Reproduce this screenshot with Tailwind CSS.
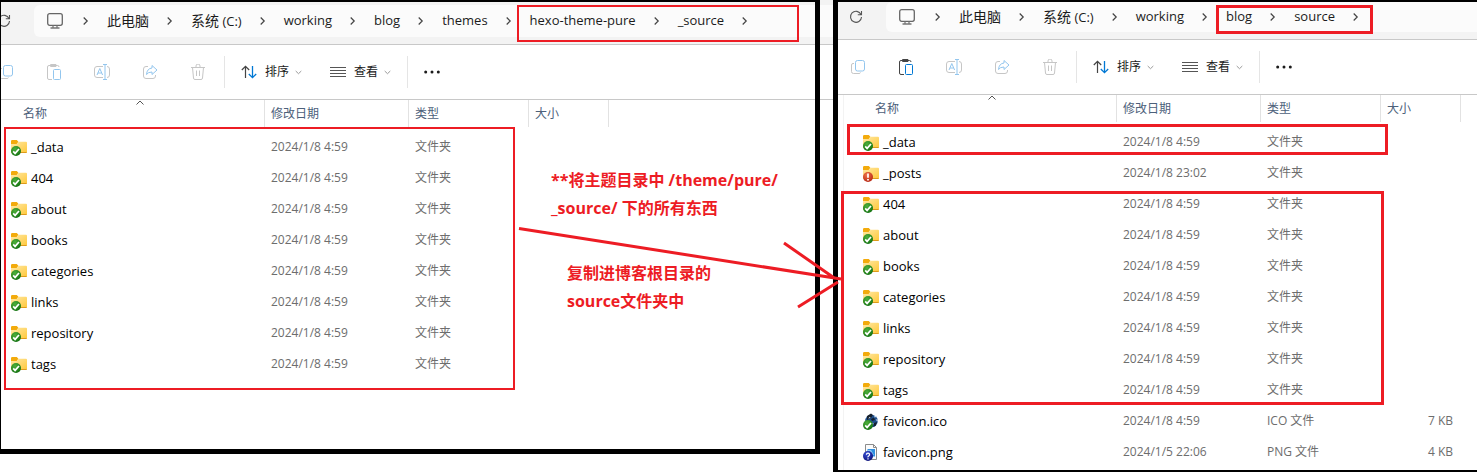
<!DOCTYPE html>
<html lang="zh-CN">
<head>
<meta charset="utf-8">
<title>source</title>
<script src="https://cdn.jsdelivr.net/npm/@tailwindcss/browser@4"></script>
</head>
<body class="relative overflow-hidden bg-white font-['Open_Sans','Noto_Sans_CJK_SC',sans-serif] text-[12px] text-[#1b1b1b]">

<svg class="absolute size-0" aria-hidden="true">
  <defs>
    <linearGradient id="gFolder" x1="0" y1="0" x2="1" y2="1"><stop offset="0" stop-color="#ffe9a6"/><stop offset="1" stop-color="#ffc83a"/></linearGradient>
    <radialGradient id="gGreen" cx=".4" cy=".3" r=".8"><stop offset="0" stop-color="#4fb03c"/><stop offset="1" stop-color="#0b6a0b"/></radialGradient>
    <radialGradient id="gRed" cx=".4" cy=".3" r=".8"><stop offset="0" stop-color="#f0764c"/><stop offset="1" stop-color="#b01e0c"/></radialGradient>
    <radialGradient id="gBlue" cx=".4" cy=".3" r=".8"><stop offset="0" stop-color="#3a52d8"/><stop offset="1" stop-color="#070a6e"/></radialGradient>
    <symbol id="folder" viewBox="0 0 16 16">
      <path d="M0 2.2Q0 1 1.2 1h4.6l1.6 1.7L5.8 5H0z" fill="#f3ab0c"/>
      <path d="M0 5h5.6l2-2.3H15a1 1 0 0 1 1 1V13a1 1 0 0 1-1 1H0z" fill="url(#gFolder)"/>
      <path d="M8 13.5h7.6" stroke="#dc9a1c"/>
    </symbol>
    <symbol id="ok" viewBox="0 0 10 10">
      <circle cx="5" cy="5" r="5" fill="url(#gGreen)"/>
      <path d="M2.2 5.4l1.9 2L8 3" fill="none" stroke="#fff" stroke-width="1.7"/>
    </symbol>
    <symbol id="warn" viewBox="0 0 10 10">
      <circle cx="5" cy="5" r="5" fill="url(#gRed)"/>
      <path d="M5 1.6v4.2M5 7v1.6" stroke="#fff" stroke-width="1.7"/>
    </symbol>
    <symbol id="unknown" viewBox="0 0 10 10">
      <circle cx="5" cy="5" r="5" fill="url(#gBlue)"/>
      <path d="M3.4 3.7Q3.5 2.2 5 2.2T6.6 3.6Q6.6 4.4 5.7 4.9T5 6.3M5 7.2v1.2" fill="none" stroke="#fff" stroke-width="1.2"/>
    </symbol>
    <symbol id="globe" viewBox="0 0 16 16">
      <circle cx="8.5" cy="8" r="6.3" fill="#1f4f8c"/>
      <path d="M4 3l4-2.5 2 1.5-2 3-4 2zM8 6l3-1.5 1 2.5-3 1zM11 10l3-1-1.5 4-2 .5z" fill="#16202c"/>
      <path d="M11 2.2l2.4 1.4-1.6 1.2zM12.6 6.4l2.4.2-.6 2zM8.6 9.6l2 .8-1.4 2.6zM5.2 5.4l1.6-1.6.8 1.2z" fill="#d4e6f5"/>
    </symbol>
    <symbol id="image" viewBox="0 0 16 16">
      <path d="M2.5 .5h8l3 3v12h-11z" fill="#fbfbfb" stroke="#8c8c8c"/>
      <path d="M10.5 .5v3h3" fill="none" stroke="#8c8c8c"/>
      <path d="M4.500 5h7.500v7.500h-7.500z" fill="#2f8fe0"/>
      <path d="M5 6h3l3 5H5z" fill="#8cc8f4"/>
    </symbol>
    <symbol id="copy" viewBox="0 0 16 16">
      <rect x="5.500" y="1.500" width="9" height="10.500" rx="2" fill="none" stroke="#93c6ee"/>
      <path d="M4 4.500H3a1.500 1.500 0 0 0-1.500 1.500v6.500a2 2 0 0 0 2 2H9A1.500 1.500 0 0 0 10.500 13.500" fill="none" stroke="#c6c6c6"/>
    </symbol>
    <symbol id="paste" viewBox="0 0 16 16">
      <path d="M6 15.500H3A1.500 1.500 0 0 1 1.500 14V3A1.500 1.500 0 0 1 3 1.500h8.500A1.500 1.500 0 0 1 13 3M4.500.5h5.500v2H4.500z" fill="none" stroke="currentColor"/>
      <rect x="7.500" y="5.500" width="7" height="10" rx="1" fill="none" stroke="var(--sheet)"/>
    </symbol>
    <symbol id="rename" viewBox="0 0 16 16">
      <path d="M9 2.500H3A2.500 2.500 0 0 0 .5 5v6A2.500 2.500 0 0 0 3 13.500h6M13 2.500A2.500 2.500 0 0 1 15.500 5v6a2.500 2.500 0 0 1-2.500 2.500" fill="none" stroke="#c6c6c6"/>
      <path d="M11 .5v15M9 .5h4M9 15.500h4M3 11l2.800-6.500L8.600 11M4 9h3.600" fill="none" stroke="#93c6ee"/>
    </symbol>
    <symbol id="share" viewBox="0 0 16 16">
      <path d="M6 2.500H4A2.500 2.500 0 0 0 1.500 5v7A2.500 2.500 0 0 0 4 14.500h7a2.500 2.500 0 0 0 2.500-2.500v-1" fill="none" stroke="#c6c6c6"/>
      <path d="M10 1.500l5 4.500-5 4.500V8Q6 8 4.500 10.500 5 4.500 10 4z" fill="none" stroke="#93c6ee" stroke-linejoin="round"/>
    </symbol>
    <symbol id="trash" viewBox="0 0 16 16">
      <path d="M1 3.500h14M6 3V2a2 2 0 0 1 4 0v1M2.500 3.500l1 10.500a1.500 1.500 0 0 0 1.500 1.500h6a1.500 1.500 0 0 0 1.500-1.500l1-10.500M6.500 6.500v5.500M9.500 6.500v5.500" fill="none" stroke="#c6c6c6"/>
    </symbol>
    <symbol id="sort" viewBox="0 0 16 16">
      <path d="M4.500 14V2.500M.8 6l3.700-3.700L8.200 6" fill="none" stroke="#444" stroke-width="1.200"/>
      <path d="M11.500 2v11.500M7.800 10l3.700 3.700L15.200 10" fill="none" stroke="#0078d4" stroke-width="1.300"/>
    </symbol>
    <symbol id="lines" viewBox="0 0 16 16">
      <path d="M0 3.500h16M0 6.500h16M0 9.500h16M0 12.500h16" stroke="#555"/>
    </symbol>
    <symbol id="down" viewBox="0 0 7 5"><path d="M.7 1l2.800 2.700L6.300 1" fill="none" stroke="#999"/></symbol>
    <symbol id="right" viewBox="0 0 6 8"><path d="M.7.5l3.500 3.500L.7 7.500" fill="none" stroke="#444" stroke-width="1.200"/></symbol>
    <symbol id="up" viewBox="0 0 8 5"><path d="M.5 4.500L4 1l3.500 3.500" fill="none" stroke="#555"/></symbol>
    <symbol id="pc" viewBox="0 0 16 16">
      <rect x=".7" y=".7" width="14.600" height="11.600" rx="2" fill="none" stroke="#666" stroke-width="1.300"/>
      <path d="M6 12.500v2M10 12.500v2M3.500 15h9" stroke="#777" stroke-width="1.300"/>
    </symbol>
    <symbol id="reload" viewBox="0 0 14 14">
      <path d="M12 4.500A5.500 5.500 0 1 0 12.500 7M12.500 1v3.800H8.800" fill="none" stroke="#555" stroke-width="1.100"/>
    </symbol>
    <symbol id="dots" viewBox="0 0 16 4"><circle cx="1.700" cy="2" r="1.500"/><circle cx="8" cy="2" r="1.500"/><circle cx="14.300" cy="2" r="1.500"/></symbol>
  </defs>
</svg>

<main class="grid min-h-screen grid-cols-[820fr_13fr_644fr] items-start">

  <section class="relative border-t-2 border-r-5 border-b-5 border-l border-black bg-white pb-[70px]" aria-label="_source">
    <div class="flex h-[42px] items-start overflow-hidden bg-[#f3f3f3] pt-[3px]">
      <button class="-ml-1 flex h-8 w-[37px] shrink-0 items-center" aria-label="刷新"><svg class="size-[14px]"><use href="#reload"/></svg></button>
      <nav data-crumbs="此电脑|系统 (C:)|working|blog|themes|hexo-theme-pure|_source" class="flex h-8 flex-1 items-center gap-[18px] rounded-l-md bg-[#fbfbfb] pl-[13px] text-[13px] whitespace-nowrap"></nav>
    </div>
    <div data-toolbar="empty" class="flex h-[56px] items-center overflow-hidden border-y border-[#c8c8c8] text-[#c6c6c6] [--sheet:#93c6ee]"><span class="-ml-[19px]"></span></div>
    <table data-files="left" class="w-full table-fixed text-left"></table>
    <div class="pointer-events-none absolute top-[3px] left-[516px] h-[37px] w-[282px] border-2 border-[#ed1c24]"></div>
    <div class="pointer-events-none absolute top-[125px] left-[3px] h-[263px] w-[511px] border-2 border-[#ed1c24]"></div>
    <p class="absolute top-[164px] left-[550px] text-[16px] leading-7 font-bold whitespace-nowrap text-[#ed1c24]">**将主题目录中 /theme/pure/<br>_source/ 下的所有东西</p>
    <p class="absolute top-[257px] left-[566px] text-[16px] leading-7 font-bold whitespace-nowrap text-[#ed1c24]">复制进博客根目录的<br>source文件夹中</p>
  </section>

  <div aria-hidden="true">
    <div class="h-11 bg-[#f3f3f3] pt-[5px]"><div class="h-8 bg-[#fbfbfb]"></div></div>
    <div class="h-[56px] border-y border-[#c8c8c8]"></div>
  </div>

  <section class="relative border-t-2 border-b-2 border-l-5 border-black bg-white pb-[3px]" aria-label="source">
    <div class="flex h-[37px] items-start overflow-hidden bg-[#f3f3f3]">
      <button class="ml-[11px] flex h-[29px] w-[37px] shrink-0 items-center" aria-label="刷新"><svg class="size-[14px]"><use href="#reload"/></svg></button>
      <nav data-crumbs="此电脑|系统 (C:)|working|blog|source" class="flex h-[30px] flex-1 items-center gap-[18px] rounded-l-md bg-[#fbfbfb] pl-[13px] text-[13px] whitespace-nowrap"></nav>
    </div>
    <div data-toolbar="ready" class="flex h-[56px] items-center overflow-hidden border-y border-[#c8c8c8] text-[#444] [--sheet:#0078d4]"><span class="-ml-1"></span></div>
    <table data-files="right" class="w-full table-fixed text-left"></table>
    <div class="pointer-events-none absolute top-[93px] bottom-0 left-[5px] w-px bg-[#f3f3f3]"></div>
    <div class="pointer-events-none absolute top-[3px] left-[378px] h-[29px] w-[157px] border-3 border-[#ed1c24]"></div>
    <div class="pointer-events-none absolute top-[122px] left-[9px] h-[31px] w-[541px] border-3 border-[#ed1c24]"></div>
    <div class="pointer-events-none absolute top-[189px] left-[3px] h-[214px] w-[543px] border-3 border-[#ed1c24]"></div>
  </section>
</main>

<svg class="pointer-events-none absolute top-[220px] left-[510px] h-[100px] w-[340px]" viewBox="0 0 340 100" fill="none" stroke="#ed1c24" stroke-width="3" aria-hidden="true">
  <path d="M9 8.500L331 59M274 23l51 35.500M288 87l40-25"/>
</svg>

<script>
  const icon = (id, cls) => `<svg class="${cls}"><use href="#${id}"/></svg>`;

  document.querySelectorAll('[data-crumbs]').forEach(nav => {
    const sep = icon('right', 'w-[6px] h-2 shrink-0');
    nav.innerHTML = icon('pc', 'size-4 shrink-0 mr-[2px]') + sep + nav.dataset.crumbs.split('|').map(t =>
      `<a href="#" class="shrink-0">${t.replace(/[\u4e00-\u9fff]+/g, '<span class="text-[14px]">$&</span>')}</a>`).join(sep) + sep;
  });

  document.querySelectorAll('[data-toolbar]').forEach(bar => {
    const names = { copy: '复制', paste: '粘贴', rename: '重命名', share: '共享', trash: '删除' };
    const line = '<span class="w-px h-8 shrink-0 bg-[#e5e5e5]"></span>';
    const menu = (id, t) => `<button class="flex items-center shrink-0 text-[#1b1b1b]">${icon(id, 'size-4 mr-2')}${t}${icon('down', 'w-[7px] h-[5px] ml-[6px]')}</button>`;
    bar.insertAdjacentHTML('beforeend',
      Object.keys(names).map(k => `<button aria-label="${names[k]}" class="w-12 h-10 shrink-0 flex items-center justify-center">${icon(k, 'size-4')}</button>`).join('') +
      `<span class="w-[2px] shrink-0"></span>${line}<div class="flex items-center gap-7 px-4">${menu('sort', '排序')}${menu('lines', '查看')}</div>${line}` +
      `<button aria-label="更多" class="ml-4 text-[#1b1b1b]">${icon('dots', 'w-4 h-1 fill-current')}</button>`);
  });

  const dir = (name, badge = 'ok', date = '2024/1/8 4:59') => ({ name, badge, date, icon: 'folder', type: '文件夹', size: '' });
  const shared = ['404', 'about', 'books', 'categories', 'links', 'repository', 'tags'].map(n => dir(n));
  const lists = {
    left: [dir('_data'), ...shared],
    right: [dir('_data'), dir('_posts', 'warn', '2024/1/8 23:02'), ...shared,
      { name: 'favicon.ico', badge: 'ok', date: '2024/1/8 4:59', icon: 'globe', type: 'ICO 文件', size: '7 KB' },
      { name: 'favicon.png', badge: 'unknown', date: '2024/1/5 22:06', icon: 'image', type: 'PNG 文件', size: '4 KB' }]
  };
  document.querySelectorAll('[data-files]').forEach(table => {
    const left = table.dataset.files === 'left';
    const th = (t, cls = 'pl-[6px]') => `<th class="p-0 font-normal align-top h-[31px] text-[#4c607a]"><div class="relative h-[27px] leading-[27px] border-r border-[#e2e2e2] ${cls}">${t}</div></th>`;
    const caret = icon('up', 'absolute w-2 h-[5px] top-0 right-[120px]');
    table.innerHTML =
      `<colgroup><col class="${left ? 'w-[264px]' : 'w-[279px]'}"><col class="w-[144px]"><col class="w-[120px]"><col class="w-[80px]"><col></colgroup>` +
      `<thead><tr>${th('名称' + caret, left ? 'pl-[22px]' : 'pl-[37px]')}${th('修改日期')}${th('类型')}${th('大小')}<td></td></tr></thead><tbody>` +
      lists[table.dataset.files].map(f => `<tr class="h-[31px] text-[#6d6d6d]">
        <td class="p-0 ${left ? 'pl-[10px]' : 'pl-[25px]'}"><div class="flex items-center gap-1 text-[13px] leading-[18px] text-black"><span class="relative size-4">${icon(f.icon, 'size-4')}${icon(f.badge, 'absolute size-[10px] left-0 -bottom-px')}</span>${f.name}</div></td>
        <td class="p-0 pl-[6px]">${f.date}</td><td class="p-0 pl-[6px]">${f.type}</td><td class="p-0 pr-2 text-right">${f.size}</td><td></td></tr>`).join('') + '</tbody>';
  });
</script>
</body>
</html>
